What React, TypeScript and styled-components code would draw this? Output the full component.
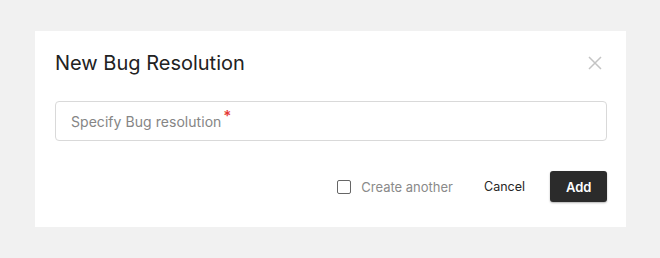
import React, { useState } from 'react';
import styled, { createGlobalStyle } from 'styled-components';

const GlobalStyle = createGlobalStyle`
  html, body {
    margin: 0;
    padding: 0;
    background: #f1f1f1;
    font-family: Inter, "Noto Sans", "Liberation Sans", sans-serif;
  }
`;

const Page = styled.div`
  width: 660px;
  height: 258px;
  padding: 31px 0 0 35px;
  box-sizing: border-box;
`;

const Dialog = styled.div`
  width: 591px;
  height: 196px;
  background: #ffffff;
  box-sizing: border-box;
  padding: 20px 19px 0 20px;
  display: flex;
  flex-direction: column;
`;

const Header = styled.div`
  display: flex;
  align-items: center;
  justify-content: space-between;
  height: 24px;
`;

const Title = styled.h2`
  margin: 0;
  font-size: 20px;
  line-height: 24px;
  font-weight: 400;
  color: #222222;
`;

const CloseButton = styled.button`
  border: none;
  background: transparent;
  padding: 0;
  width: 16px;
  height: 16px;
  margin-right: 4px;
  display: flex;
  align-items: center;
  justify-content: center;
  cursor: pointer;
`;

const Field = styled.label`
  margin-top: 26px;
  height: 40px;
  border: 1px solid #d9d9d9;
  border-radius: 4px;
  box-sizing: border-box;
  display: flex;
  align-items: center;
  padding: 0 15px;
`;

const Placeholder = styled.span`
  font-size: 14px;
  color: #858585;
  position: relative;
  letter-spacing: 0.05px;
`;

const Required = styled.span`
  color: #e53935;
  font-size: 15px;
  font-weight: 600;
  position: absolute;
  top: -7px;
  right: -10px;
`;

const Footer = styled.div`
  margin-top: 30px;
  display: flex;
  justify-content: flex-end;
  align-items: center;
`;

const CheckLabel = styled.label`
  display: flex;
  align-items: center;
  gap: 10px;
  font-size: 13px;
  color: #8a8a8a;
  margin-right: 31px;
  cursor: pointer;
`;

const Box = styled.span`
  width: 14px;
  height: 14px;
  box-sizing: border-box;
  border: 1px solid #666666;
  border-radius: 2px;
  background: #fff;
`;

const Button = styled.button<{ $primary?: boolean }>`
  font-family: inherit;
  font-size: ${p => (p.$primary ? '13px' : '12.5px')};
  height: 31px;
  border-radius: 3px;
  border: none;
  cursor: pointer;
  padding: ${p => (p.$primary ? '0 16px' : '0 0')};
  width: ${p => (p.$primary ? '57px' : 'auto')};
  margin-left: ${p => (p.$primary ? '25px' : '0')};
  background: ${p => (p.$primary ? '#2b2b2b' : 'transparent')};
  color: ${p => (p.$primary ? '#ffffff' : '#262626')};
  font-weight: ${p => (p.$primary ? 600 : 400)};
  box-shadow: ${p => (p.$primary ? '0 1px 2px rgba(0,0,0,0.3)' : 'none')};
`;

export default function App() {
  const [another, setAnother] = useState(false);
  return (
    <>
      <GlobalStyle />
      <Page>
        <Dialog>
          <Header>
            <Title>New Bug Resolution</Title>
            <CloseButton aria-label="Close">
              <svg width="14" height="14" viewBox="0 0 14 14">
                <path d="M1 1 L13 13 M13 1 L1 13" stroke="#c4c4c4" strokeWidth="1.5" />
              </svg>
            </CloseButton>
          </Header>
          <Field>
            <Placeholder>
              Specify Bug resolution
              <Required>*</Required>
            </Placeholder>
          </Field>
          <Footer>
            <CheckLabel onClick={() => setAnother(!another)}>
              <Box />
              Create another
            </CheckLabel>
            <Button>Cancel</Button>
            <Button $primary>Add</Button>
          </Footer>
        </Dialog>
      </Page>
    </>
  );
}
